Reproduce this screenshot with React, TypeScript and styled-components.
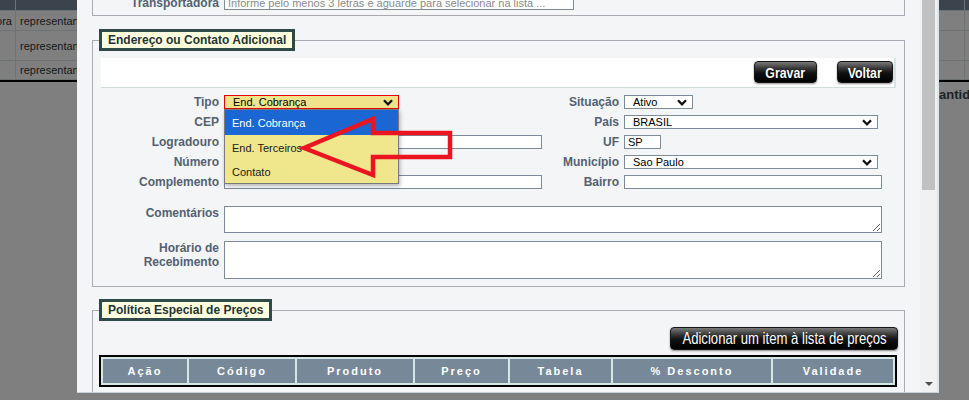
import React from 'react';
import styled, { createGlobalStyle } from 'styled-components';

const GlobalStyle = createGlobalStyle`
  html, body {
    margin: 0;
    padding: 0;
    overflow: hidden;
    background: #fff;
  }
  body {
    font-family: "Liberation Sans", Arial, sans-serif;
  }
`

const priceColumns = [
  { title: 'Ação', w: 84 },
  { title: 'Código', w: 106 },
  { title: 'Produto', w: 116 },
  { title: 'Preço', w: 93 },
  { title: 'Tabela', w: 101 },
  { title: '% Desconto', w: 158 },
  { title: 'Validade', w: 120 },
]

const Chevron: React.FC = () => (
  <svg width="10" height="7" viewBox="0 0 10 7">
    <path d="M1 1.3 L5 5.3 L9 1.3" fill="none" stroke="#111" strokeWidth="2.3" />
  </svg>
)

const App: React.FC = () => {
  return (
    <Page>
      <GlobalStyle />

      <BgTable>
        <BgHead />
        <BgHead />
        <BgHead />
        <BgCell $right>Transportadora</BgCell>
        <BgCell>representante comercial</BgCell>
        <BgCell />
        <BgCell />
        <BgCell>representante comercial</BgCell>
        <BgCell />
        <BgCell />
        <BgCell>representante comercial</BgCell>
        <BgCell />
      </BgTable>
      <BgCaption>Quantidade</BgCaption>

      <Overlay />

      <Modal>
        <Content>
          <Scroller>
            <Section $pad="15px 8px 5px 8px">
              <FormGrid>
                <Label>Transportadora</Label>
                <Input $w={350} readOnly placeholder="Informe pelo menos 3 letras e aguarde para selecionar na lista ..." />
              </FormGrid>
            </Section>

            <Section $pad="7px 8px 7px 8px" $top={13}>
              <Legend $shift={-2}>Endereço ou Contato Adicional</Legend>

              <Toolbar>
                <BlackButton $w={63}>
                  <ButtonText>Gravar</ButtonText>
                </BlackButton>
                <BlackButton $w={56}>
                  <ButtonText>Voltar</ButtonText>
                </BlackButton>
              </Toolbar>

              <FormGrid $top={7}>
                <Label>Tipo</Label>
                <DropWrap>
                  <FakeSelect $w={175} $active>
                    <span>End. Cobrança</span>
                    <Chevron />
                  </FakeSelect>
                  <DropList>
                    <DropItem $h={25} $selected>End. Cobrança</DropItem>
                    <DropItem $h={25}>End. Terceiros</DropItem>
                    <DropItem $h={23}>Contato</DropItem>
                  </DropList>
                </DropWrap>
                <Label>Situação</Label>
                <FakeSelect $w={69}>
                  <span>Ativo</span>
                  <Chevron />
                </FakeSelect>

                <Label>CEP</Label>
                <Input $w={100} readOnly />
                <Label>País</Label>
                <FakeSelect $w={254}>
                  <span>BRASIL</span>
                  <Chevron />
                </FakeSelect>

                <Label>Logradouro</Label>
                <Input $w={318} readOnly />
                <Label>UF</Label>
                <Input $w={37} readOnly defaultValue="SP" />

                <Label>Número</Label>
                <Input $w={100} readOnly />
                <Label>Município</Label>
                <FakeSelect $w={254}>
                  <span>Sao Paulo</span>
                  <Chevron />
                </FakeSelect>

                <Label>Complemento</Label>
                <Input $w={318} readOnly />
                <Label>Bairro</Label>
                <Input $w={258} readOnly />
              </FormGrid>

              <NotesGrid>
                <Label>Comentários</Label>
                <TextBox $h={27} readOnly />
                <Label>
                  Horário de
                  <br />
                  Recebimento
                </Label>
                <TextBox $h={38} readOnly />
              </NotesGrid>
            </Section>

            <Section $pad="6px 7px 20px 6px" $top={12}>
              <Legend>Política Especial de Preços</Legend>

              <ActionRow>
                <BlackButton $w={228} $h={23} $plain>
                  <ButtonText>Adicionar um item à lista de preços</ButtonText>
                </BlackButton>
              </ActionRow>

              <PriceTable>
                <thead>
                  <tr>
                    {priceColumns.map(col => (
                      <PriceHead key={col.title} style={{ width: col.w }}>
                        {col.title}
                      </PriceHead>
                    ))}
                  </tr>
                </thead>
              </PriceTable>
            </Section>
          </Scroller>
        </Content>

        <ScrollTrack>
          <ScrollThumb />
          <ScrollArrow />
        </ScrollTrack>
      </Modal>

      <Pointer width="170" height="80" viewBox="0 0 170 80">
        <polygon
          points="14,40 83,11 83,25 160,25 160,49 83,49 83,67"
          fill="none"
          stroke="#ea1520"
          strokeWidth="4.5"
        />
      </Pointer>
    </Page>
  )
}

const Page = styled.div`
  position: relative;
  width: 969px;
  height: 400px;
  overflow: hidden;
`

const BgTable = styled.div`
  display: grid;
  grid-template-columns: 15px 1fr 4px;
  grid-template-rows: 10px 19px 29px 18px;
  gap: 1px;
  padding-bottom: 1px;
  background: #dbe6e6;
  border-bottom: 2px solid #000;
`

const BgHead = styled.div`
  background: #778899;
`

const BgCell = styled.div<{ $right?: boolean }>`
  display: flex;
  align-items: center;
  justify-content: ${props => (props.$right ? 'flex-end' : 'flex-start')};
  padding: ${props => (props.$right ? '0 3px 0 0' : '0 0 0 4px')};
  overflow: hidden;
  white-space: nowrap;
  background: #fff;
  color: #333;
  font-size: 11px;
`

const BgCaption = styled.div`
  margin-top: 5px;
  padding-left: 921px;
  white-space: nowrap;
  color: #444;
  font-size: 13px;
  font-weight: 700;
  line-height: 16px;
`

const Overlay = styled.div`
  position: fixed;
  inset: 0;
  background: rgba(0, 0, 0, 0.5);
  z-index: 1;
`

const Modal = styled.div`
  position: fixed;
  top: 0;
  left: 77px;
  width: 862px;
  height: 393px;
  box-sizing: border-box;
  display: flex;
  background: #f4f5f7;
  border-right: 2px solid #dbe5ee;
  border-bottom: 1px solid #c8d0d8;
  z-index: 2;
`

const Content = styled.div`
  flex: 1;
  overflow: hidden;
`

const Scroller = styled.div`
  margin-top: -20px;
  padding: 0 15px 0 15px;
`

const Section = styled.fieldset<{ $pad: string; $top?: number }>`
  margin: ${props => props.$top || 0}px 0 0 0;
  padding: ${props => props.$pad};
  border: 1px solid #a8acb2;
  min-width: 0;
`

const Legend = styled.legend<{ $shift?: number }>`
  margin-left: ${props => props.$shift || 0}px;
  padding: 0 6px;
  border: 3px solid #2f4b49;
  background: #ffffe0;
  color: #243434;
  font-size: 12px;
  font-weight: 700;
  line-height: 16px;
`

const Toolbar = styled.div`
  display: flex;
  justify-content: flex-end;
  align-items: flex-start;
  gap: 20px;
  height: 30px;
  box-sizing: border-box;
  padding: 3px 1px 0 0;
  background: #fff;
  border-right: 2px solid #d6e6e6;
  border-bottom: 1px solid #cfdcdc;
`

const BlackButton = styled.button<{ $w: number; $h?: number; $plain?: boolean }>`
  display: flex;
  align-items: center;
  justify-content: center;
  width: ${props => props.$w}px;
  height: ${props => props.$h || 22}px;
  box-sizing: border-box;
  padding: 0;
  border: 1px solid #161616;
  border-radius: 4px;
  background: linear-gradient(to bottom, #7a7a7a 0%, #3a3a3a 30%, #111 55%, #000 100%);
  box-shadow: 0 1px 2px rgba(0, 0, 0, 0.45);
  color: #fff;
  font-family: "Liberation Sans", Arial, sans-serif;
  font-size: ${props => (props.$plain ? 16 : 15)}px;
  font-weight: ${props => (props.$plain ? 400 : 700)};
  line-height: 1;
  text-shadow: 0 1px 1px #000;
  white-space: nowrap;
  overflow: visible;
  cursor: pointer;
`

const ButtonText = styled.span`
  display: inline-block;
  transform: scaleX(0.82);
  transform-origin: center;
`

const FormGrid = styled.div<{ $top?: number }>`
  display: grid;
  grid-template-columns: 123px 318px 82px 1fr;
  grid-auto-rows: 14px;
  row-gap: 6px;
  align-items: center;
  margin-top: ${props => props.$top || 0}px;
`

const Label = styled.div`
  padding-right: 5px;
  text-align: right;
  white-space: nowrap;
  color: #536171;
  font-size: 12px;
  font-weight: 700;
  line-height: 14px;
`

const Input = styled.input<{ $w: number }>`
  display: block;
  width: ${props => props.$w}px;
  height: 14px;
  box-sizing: border-box;
  margin: 0;
  padding: 0 3px;
  border: 1px solid #7d8c9b;
  border-radius: 0;
  background: #fff;
  color: #000;
  font-family: "Liberation Sans", Arial, sans-serif;
  font-size: 11px;
  outline: none;

  &::placeholder {
    color: #8a8a8a;
  }
`

const FakeSelect = styled.div<{ $w: number; $active?: boolean }>`
  display: flex;
  align-items: center;
  justify-content: space-between;
  width: ${props => props.$w}px;
  height: 14px;
  box-sizing: border-box;
  padding: 0 5px 0 8px;
  border: 1px solid ${props => (props.$active ? '#e8000b' : '#7d8c9b')};
  background: ${props => (props.$active ? '#efe48c' : '#fff')};
  color: #000;
  font-size: 11px;
  line-height: 12px;
  white-space: nowrap;
`

const DropWrap = styled.div`
  position: relative;
  height: 14px;
`

const DropList = styled.div`
  position: absolute;
  top: 14px;
  left: 0;
  width: 175px;
  box-sizing: border-box;
  border: 1px solid #7a7a7a;
  background: #f0e68c;
  box-shadow: 1px 2px 4px rgba(0, 0, 0, 0.3);
  z-index: 3;
`

const DropItem = styled.div<{ $h: number; $selected?: boolean }>`
  display: flex;
  align-items: center;
  height: ${props => props.$h}px;
  padding-left: 7px;
  background: ${props => (props.$selected ? '#1a67d3' : 'transparent')};
  color: ${props => (props.$selected ? '#fff' : '#1a1a1a')};
  font-size: 11px;
`

const NotesGrid = styled.div`
  display: grid;
  grid-template-columns: 123px 658px;
  row-gap: 8px;
  align-items: start;
  margin-top: 17px;
`

const TextBox = styled.textarea<{ $h: number }>`
  display: block;
  width: 658px;
  height: ${props => props.$h}px;
  box-sizing: border-box;
  margin: 0;
  padding: 2px;
  border: 1px solid #7d8c9b;
  border-radius: 0;
  background: #fff;
  font-family: "Liberation Sans", Arial, sans-serif;
  font-size: 11px;
  outline: none;
`

const ActionRow = styled.div`
  display: flex;
  justify-content: flex-end;
  margin: 0 -1px 5px 0;
`

const PriceTable = styled.table`
  width: 798px;
  table-layout: fixed;
  border: 2px solid #000;
  border-spacing: 2px;
  background: #d5e7e5;
`

const PriceHead = styled.th`
  height: 24px;
  padding: 0;
  background: #778899;
  color: #fff;
  font-size: 11px;
  font-weight: 700;
  letter-spacing: 2px;
  text-align: center;
`

const ScrollTrack = styled.div`
  display: flex;
  flex-direction: column;
  justify-content: space-between;
  width: 17px;
  background: #f1f1f1;
`

const ScrollThumb = styled.div`
  height: 190px;
  margin: 0 2px;
  background: #c1c1c1;
`

const ScrollArrow = styled.div`
  width: 0;
  height: 0;
  margin: 0 auto 6px;
  border-left: 4px solid transparent;
  border-right: 4px solid transparent;
  border-top: 4px solid #505050;
`

const Pointer = styled.svg`
  position: absolute;
  top: 108px;
  left: 290px;
  z-index: 4;
  overflow: visible;
`

export default App
